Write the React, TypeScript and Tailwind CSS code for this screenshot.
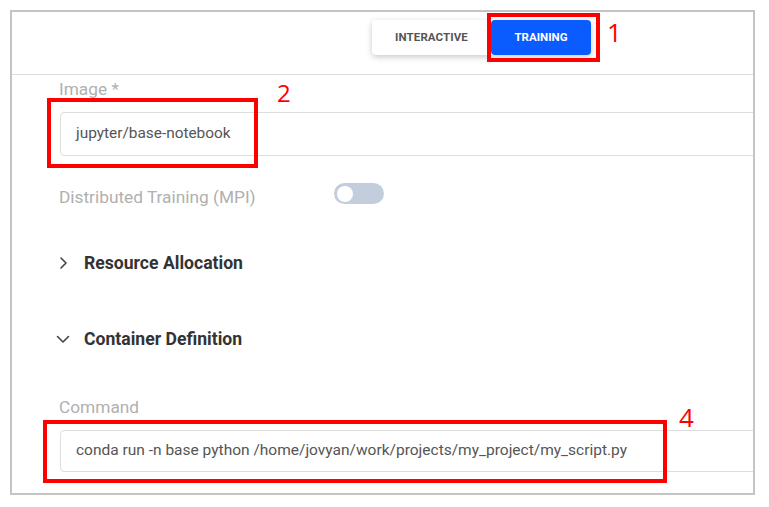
import React from "react";

const font = { fontFamily: "Roboto, 'Liberation Sans', sans-serif" };

function ChevronRight() {
  return (
    <svg width="16" height="16" viewBox="0 0 16 16" fill="none">
      <path d="M6 3 L11 8 L6 13" stroke="#444" strokeWidth="1.6" strokeLinecap="round" strokeLinejoin="round" />
    </svg>
  );
}

function ChevronDown() {
  return (
    <svg width="16" height="16" viewBox="0 0 16 16" fill="none">
      <path d="M2.5 5.5 L8 11 L13.5 5.5" stroke="#444" strokeWidth="1.6" strokeLinecap="round" strokeLinejoin="round" />
    </svg>
  );
}

export default function App() {
  return (
    <div className="relative w-[769px] h-[507px] bg-white pt-[10px] pl-[10px]" style={font}>
      <div className="w-[745px] h-[485px] border-2 border-[#c4c4c4] overflow-hidden flex flex-col">
        {/* header */}
        <div className="h-[63px] shrink-0 border-b border-[#dcdcdc] pl-[360px] pt-[8px]">
          <div className="flex w-[219px] h-[35px] bg-white rounded-[4px] shadow-[0_2px_6px_rgba(0,0,0,0.22)]">
            <div className="w-[119px] flex items-center justify-center text-[11.5px] font-bold text-[#555] tracking-[0.1px]">
              INTERACTIVE
            </div>
            <div className="w-[100px] flex items-center justify-center rounded-[4px] bg-[#0a5cff] text-white text-[11.5px] font-bold">
              TRAINING
            </div>
          </div>
        </div>

        {/* body */}
        <div className="pl-[47px] flex flex-col">
          <div className="mt-[2px] h-[24px] leading-[24px] text-[17.3px] text-[#b0b0b0]">Image *</div>
          <div className="mt-[11px] ml-[1px] h-[44px] w-[800px] border border-[#dedede] rounded-[4px] flex items-center pl-[15px] text-[15.4px] text-[#555]">
            jupyter/base-notebook
          </div>

          <div className="mt-[26px] flex items-start">
            <div className="w-[275px] h-[24px] mt-[3px] leading-[24px] text-[17.3px] text-[#b0b0b0]">Distributed Training (MPI)</div>
            <div className="mt-[1px] w-[50px] h-[21px] rounded-full bg-[#c3cedc] flex items-center pl-[3px]">
              <div className="w-[16px] h-[16px] rounded-full bg-white" />
            </div>
          </div>

          <div className="mt-[42px] flex items-center h-[24px]">
            <div className="-ml-[4px] w-[16px] h-[16px]">
              <ChevronRight />
            </div>
            <div className="ml-[13px] text-[17.6px] font-bold text-[#333] leading-[24px]">Resource Allocation</div>
          </div>

          <div className="mt-[52px] flex items-center h-[24px]">
            <div className="-ml-[4px] w-[16px] h-[16px]">
              <ChevronDown />
            </div>
            <div className="ml-[13px] text-[17.6px] font-bold text-[#333] leading-[24px]">Container Definition</div>
          </div>

          <div className="mt-[44px] h-[24px] leading-[24px] text-[17.3px] text-[#b0b0b0]">Command</div>
          <div className="mt-[11px] ml-[1px] h-[42px] w-[800px] border border-[#dedede] rounded-[4px] flex items-center pl-[15px] text-[15.5px] text-[#555]">
            conda run -n base python /home/jovyan/work/projects/my_project/my_script.py
          </div>
        </div>
      </div>

      {/* annotations */}
      <div className="absolute left-[487px] top-[13px] w-[113px] h-[49px] border-[4px] border-[#ff0000]" />
      <div className="absolute left-[607px] top-[19px] text-[26px] leading-[26px] text-[#ff0000]" style={{ fontFamily: "'Open Sans', 'Liberation Sans', sans-serif" }}>1</div>

      <div className="absolute left-[47px] top-[98px] w-[211px] h-[70px] border-[4px] border-[#ff0000]" />
      <div className="absolute left-[277px] top-[81px] text-[24px] leading-[24px] text-[#ff0000]" style={{ fontFamily: "'Open Sans', 'Liberation Sans', sans-serif" }}>2</div>

      <div className="absolute left-[43px] top-[420px] w-[624px] h-[63px] border-[4px] border-[#ff0000]" />
      <div className="absolute left-[679px] top-[404px] text-[26px] leading-[26px] text-[#ff0000]" style={{ fontFamily: "'Open Sans', 'Liberation Sans', sans-serif" }}>4</div>
    </div>
  );
}
